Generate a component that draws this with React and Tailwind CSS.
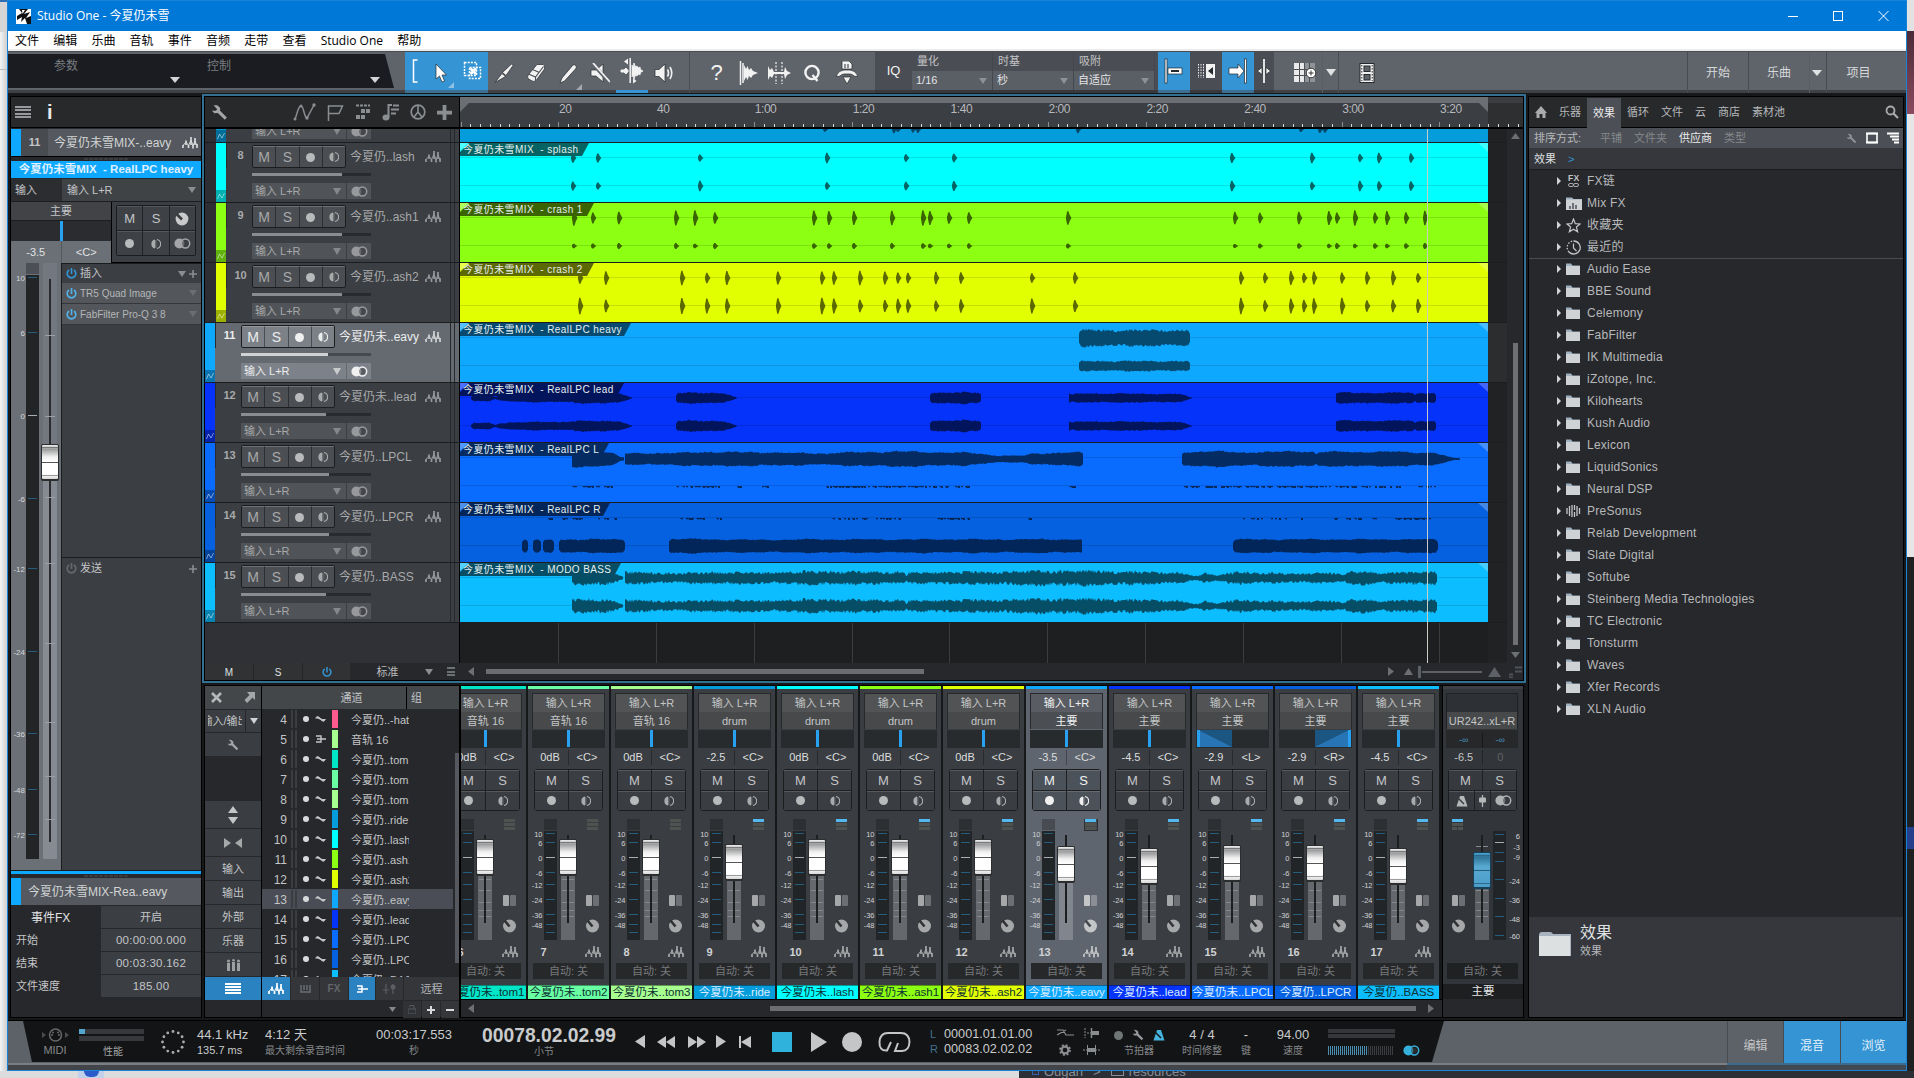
import React from "react";

/* ---------- shared glyphs ---------- */

const Down = ({ c = "#8b8e91", w = 8, h = 6 }) => (
  <svg width={w} height={h} viewBox="0 0 8 6" preserveAspectRatio="none" className="shrink-0">
    <path d="M0 0H8L4 6Z" fill={c} />
  </svg>
);
const Tri = ({ d, c = "#6d7073", w = 8, h = 8 }) => (
  <svg width={w} height={h} viewBox="0 0 10 10" preserveAspectRatio="none" className="shrink-0">
    <path
      d={d === "l" ? "M10 0V10L0 5Z" : d === "r" ? "M0 0V10L10 5Z" : d === "u" ? "M0 10H10L5 0Z" : "M0 0H10L5 10Z"}
      fill={c}
    />
  </svg>
);
const Wave = ({ c = "#97999c" }) => (
  <svg width="16" height="13" viewBox="0 0 16 13" className="shrink-0">
    <path d="M1 12V9M4 9V4.500M6.500 12V9M9 9V1M11 12.500V9M13 9V2M15 12V8" stroke={c} strokeWidth="1.700" />
    <path d="M1 9.500L4 6L6.500 9.500L9 4L11 9.500L13 5L15 9.500" fill="none" stroke={c} strokeWidth="1" />
  </svg>
);
const Dot = ({ c = "#b9babb", s = 9 }) => (
  <svg width={s} height={s} viewBox="0 0 10 10" className="shrink-0">
    <circle cx="5" cy="5" r="5" fill={c} />
  </svg>
);
const Half = ({ c = "#a9abac" }) => (
  <svg width="10" height="10" viewBox="0 0 10 10" className="shrink-0">
    <path d="M4 0.5A4.6 4.6 0 0 0 4 9.5Z" fill={c} />
    <path d="M6 0.5A4.6 4.6 0 0 1 6 9.5" fill="none" stroke={c} strokeWidth="1.2" />
    <path d="M4.8 1V9" stroke={c} strokeWidth="0.6" />
  </svg>
);
const Rings = ({ c = "#a3a5a7" }) => (
  <svg width="17" height="11" viewBox="0 0 17 11" className="shrink-0">
    <circle cx="5.4" cy="5.5" r="5" fill={c} />
    <circle cx="11.3" cy="5.5" r="4.4" fill="none" stroke={c} strokeWidth="1.5" />
    <circle cx="11.3" cy="5.5" r="3.2" fill="#3a3c3f" opacity=".55" />
  </svg>
);
const Dial = ({ c = "#a9abac" }) => (
  <svg width="14" height="14" viewBox="0 0 14 14" className="shrink-0">
    <circle cx="7" cy="7" r="6.4" fill={c} />
    <path d="M7 7.5L1.5 2" stroke="#3b3d40" strokeWidth="2.6" />
  </svg>
);
const Power = ({ c = "#3494d4", s = 11 }) => (
  <svg width={s} height={s} viewBox="0 0 12 12" className="shrink-0">
    <path d="M3.3 2.2A4.7 4.7 0 1 0 8.7 2.2" fill="none" stroke={c} strokeWidth="1.8" />
    <path d="M6 0V6.5" stroke={c} strokeWidth="1.8" />
  </svg>
);
const Plus = ({ c = "#8b8e91", s = 8, t = 2 }) => (
  <svg width={s} height={s} viewBox="0 0 10 10" className="shrink-0">
    <path d="M5 0V10M0 5H10" stroke={c} strokeWidth={t} />
  </svg>
);
const Wrench = ({ c = "#a3a5a7", s = 15 }) => (
  <svg width={s} height={s} viewBox="0 0 15 15" className="shrink-0">
    <path d="M2.2 1L5.5 1.2L8 3.4L8 6L14 12L12.2 14L6 8L3 8.2L0.8 6L4.2 6L5.5 4.6Z" fill={c} />
  </svg>
);
const Lines = ({ c = "#97999c", w = 16, h = 12, n = 4 }) => (
  <div className="flex flex-col justify-between shrink-0" style={{ width: w, height: h }}>
    {Array.from({ length: n }, (_, i) => (
      <div key={i} className="h-[2px]" style={{ background: c }} />
    ))}
  </div>
);
const Grip = () => (
  <div className="flex gap-px justify-center">
    {Array.from({ length: 9 }, (_, i) => (
      <div key={i} className="w-[4px] h-[2px] bg-[#3a3c3f]" />
    ))}
  </div>
);

/* ---------- title, menu, toolbar ---------- */

function TitleBar() {
  return (
    <div className="h-[31px] shrink-0 bg-[#0078d7] border-t border-[#1883d7] flex items-center text-white font-['Open_Sans','Noto_Sans_CJK_SC',sans-serif] text-[12px]">
      <svg width="15" height="15" viewBox="0 0 15 15" className="ml-2 mr-[6px]">
        <rect width="15" height="15" fill="#fff" />
        <path d="M3 0H12L8 5L14 3L10 9L15 7V15H11L9 9L5 13L6 8L1 11V7L6 4Z" fill="#111" />
        <path d="M6 1L9 1L6.5 5Z" fill="#fff" />
      </svg>
      <span>Studio One - 今夏仍未雪</span>
      <div className="ml-auto flex items-center">
        <svg width="118" height="12" viewBox="0 0 118 12" className="mr-[5px]">
          <path d="M5 6.5H15" stroke="#fff" />
          <rect x="50.5" y="1.5" width="9" height="9" fill="none" stroke="#fff" />
          <path d="M95.500 1L105.500 11M105.500 1L95.500 11" stroke="#fff" />
        </svg>
      </div>
    </div>
  );
}

function MenuBar() {
  return (
    <div className="h-[20px] shrink-0 bg-white border-b-2 border-[#ececec] flex items-center gap-[14.200px] pt-[2px] pl-[7px] text-black text-[12px] leading-none font-['Open_Sans','Noto_Sans_CJK_SC',sans-serif]">
      {["文件", "编辑", "乐曲", "音轨", "事件", "音频", "走带", "查看", "Studio One", "帮助"].map((m) => (
        <span key={m}>{m}</span>
      ))}
    </div>
  );
}

const Cell = ({ w, className = "", children }) => (
  <div className={"flex items-center justify-center shrink-0 h-full " + className} style={{ width: w }}>
    {children}
  </div>
);

const Param = ({ w, label, value }) => (
  <div className="flex flex-col h-full shrink-0 text-[11px] border-r border-[#44474c]" style={{ width: w }}>
    <div className="h-[20px] pl-[5px] flex items-center text-[#c2c4c6]">{label}</div>
    <div className="h-[19px] bg-[#5a5e65] pl-[4px] pr-[5px] flex items-center justify-between text-[#e3e4e5]">
      {value}
      <Down c="#8d9196" />
    </div>
  </div>
);

function Toolbar() {
  const ink = "#f2f2f2";
  const o = { stroke: "#26292c", strokeWidth: 0.7 };
  return (
    <div className="h-[42px] shrink-0 bg-[#5f646b] border-t border-[#484b50] flex text-[12px] text-[#d6d8d9] [box-shadow:inset_0_-3px_0_#3e4145]">
      <div className="w-[386px] h-[34px] mt-[2px] bg-[#1a1c21] text-[#797c80] flex [clip-path:polygon(0_0,377px_0,386px_100%,0_100%)]">
        <div className="w-[180px] pl-[46px] flex">
          <span className="mt-[3px]">参数</span>
          <div className="ml-auto mt-[23px] mr-[8px]"><Down c="#d3d5d6" w={10} /></div>
        </div>
        <div className="w-[200px] pl-[19px] flex">
          <span className="mt-[3px]">控制</span>
          <div className="ml-auto mt-[23px] mr-[8px]"><Down c="#d3d5d6" w={10} /></div>
        </div>
      </div>
      <div className="w-[11px]" />
      <div className="w-[83px] h-full bg-[#3494d4] border-b-[3px] border-[#3c6f92] flex items-center">
        <Cell w={20}>
          <svg width="6" height="24" viewBox="0 0 6 24"><path d="M5.500 1H1.500V23H5.500" fill="none" stroke="#fff" strokeWidth="1.500" /></svg>
        </Cell>
        <Cell w={31}>
          <svg width="31" height="38" viewBox="0 0 31 38">
            <path d="M11 12V27L14.500 24L17 30L19.500 29L17 23H21.500Z" fill="#fff" {...o} />
            <path d="M29 30V36H23Z" fill="#8fc0e4" />
          </svg>
        </Cell>
        <Cell w={34}>
          <svg width="20" height="20" viewBox="0 0 20 20">
            <rect x="1.500" y="1.500" width="12" height="13" fill="none" stroke="#fff" strokeWidth="1.500" strokeDasharray="2 1.200" />
            <rect x="6.500" y="6.500" width="11" height="11" fill="none" stroke="#fff" strokeWidth="1.500" strokeDasharray="2 1.200" />
            <path d="M7.500 7.500L13 13M13 7.500L7.500 13" stroke="#fff" strokeWidth="2.800" />
          </svg>
        </Cell>
      </div>
      <Cell w={32}>
        <svg width="20" height="20" viewBox="0 0 20 20"><path d="M17.500 1L8.500 9.500L12 12.500L19 2.500Z" fill={ink} {...o} /><path d="M8 10.500L1 19.500L11.500 13.500Z" fill={ink} {...o} /></svg>
      </Cell>
      <Cell w={32}>
        <svg width="20" height="20" viewBox="0 0 20 20"><path d="M11 1.500L17 1.500Q19 2 18.500 6L10 17.500Q8.500 19 6 18L2 15.500Q1 14 2.500 11.500Z" fill={ink} {...o} /><path d="M2.500 11L9.500 14L17.500 3.500M9.500 14V18M6.500 6.500L13.500 9.500" fill="none" stroke="#4a4d51" strokeWidth="1.100" /></svg>
      </Cell>
      <Cell w={32}>
        <svg width="30" height="38" viewBox="0 0 30 38"><path d="M7 29L9 24L20 11Q22 10 23 12Q24 13.500 22.500 15L11.500 27Z" fill={ink} {...o} /><path d="M29 30V36H23Z" fill="#a5a8ac" /></svg>
      </Cell>
      <Cell w={32}>
        <svg width="20" height="20" viewBox="0 0 20 20"><path d="M1 7H6L13 1V19L6 13H1Z" fill={ink} {...o} /><path d="M2 0L19 19" stroke="#5f646b" strokeWidth="3.500" /><path d="M3 0L20 19" stroke={ink} strokeWidth="1.800" /></svg>
      </Cell>
      <Cell w={32} className="border-b-[3px] border-[#3494d4]">
        <svg width="24" height="26" viewBox="0 0 24 26"><path d="M1 12H4L6 10L7.500 12H8V14H7.500L6 16L4 14H1Z" fill={ink} stroke={ink} /><path d="M12 7L13 9L14 5L15.500 9L17 8L18.500 10L20 9L20.500 11.500L23 13L20.500 14.500L20 17L18.500 16L17 18L15.500 17L14 21L13 17L12 19Z" fill={ink} stroke={ink} strokeWidth=".8" /><path d="M10.200 0V25" stroke={ink} strokeWidth="1.500" /><path d="M8 0.500V6.500L4 3.500ZM13 25.500V20L16.500 23Z" fill={ink} /></svg>
      </Cell>
      <Cell w={42} className="border-r border-[#4a4d52] pr-[9px]">
        <svg width="20" height="20" viewBox="0 0 20 20"><path d="M1 6.500H5L11 1V19L5 13.500H1Z" fill={ink} {...o} /><path d="M13.500 6.500Q15.500 10 13.500 13.500M16 4Q19.500 10 16 16" fill="none" stroke={ink} strokeWidth="1.600" /></svg>
      </Cell>
      <Cell w={53} className="text-[22px] text-[#f2f2f2]">?</Cell>
      <Cell w={12} className="overflow-visible">
        <svg width="20" height="24" viewBox="0 0 20 24" className="shrink-0"><path d="M1.500 0V24M4 2V22" stroke={ink} strokeWidth="1.500" /><path d="M5 4L7 8L8.500 5L10 9L12 7L14 10L19 12L14 14L12 17L10 15L8.500 19L7 16L5 20Z" fill={ink} /></svg>
      </Cell>
      <Cell w={50}>
        <svg width="24" height="22" viewBox="0 0 24 22"><path d="M0 4L2 8L4 6L6 10H16L17 5L19 9L23 11L19 13L17 17L16 12H6L4 16L2 14L0 18Z" fill={ink} /><path d="M8 0V22M14 0V22" stroke={ink} strokeDasharray="2 1.500" strokeWidth="1.200" /></svg>
      </Cell>
      <Cell w={14}>
        <svg width="18" height="20" viewBox="0 0 18 20" className="shrink-0"><circle cx="9" cy="9.500" r="6.600" fill="none" stroke={ink} strokeWidth="2.400" /><path d="M9.500 12L14.500 18" stroke={ink} strokeWidth="2.400" /></svg>
      </Cell>
      <Cell w={56}>
        <svg width="24" height="24" viewBox="0 0 24 24"><path d="M7 0H14L17 3V8H7ZM1 15Q4 9 9 9H15Q20 9 23 15L20 15.500Q17 13 15 13H9Q7 13 4 15.500ZM8 16H16L12 23Z" fill={ink} {...o} /><path d="M10 3V7M13 3V7" stroke="#4b4f54" strokeWidth="1.200" /></svg>
      </Cell>
      <Cell w={37} className="bg-[#4a4d53] text-[13px] text-[#f2f2f2] border-b-[3px] border-[#37393d]">IQ</Cell>
      <div className="flex bg-[#4a4d53] h-full border-b-[3px] border-[#37393d] shrink-0">
        <Param w={81} label="量化" value="1/16" />
        <Param w={81} label="时基" value="秒" />
        <Param w={81} label="吸附" value="自适应" />
        <div className="w-[3px]" />
      </div>
      <Cell w={32} className="bg-[#3494d4] border-b-[3px] border-[#3c6f92]">
        <svg width="20" height="26" viewBox="0 0 20 26"><rect x="1" y="1" width="2" height="24" fill="#fff" {...o} /><rect x="4" y="10" width="14" height="6" fill="#fff" {...o} /><rect x="7" y="12" width="8" height="2" fill="#26292c" /></svg>
      </Cell>
      <Cell w={32} className="bg-[#4a4d53] border-b-[3px] border-[#37393d]">
        <svg width="18" height="14" viewBox="0 0 18 14"><path d="M1.500 0V14M4 0V14M6.500 0V14" stroke={ink} strokeDasharray="1.500 1.200" /><rect x="9" y="0" width="9" height="14" fill={ink} /><path d="M16 3V11L11 7Z" fill="#26292c" /></svg>
      </Cell>
      <Cell w={32} className="bg-[#3494d4] border-b-[3px] border-[#3c6f92]">
        <svg width="20" height="26" viewBox="0 0 20 26"><path d="M1 10H10V6L16 13L10 20V16H1Z" fill="#fff" {...o} /><rect x="16.500" y="1" width="2" height="24" fill="#fff" {...o} /></svg>
      </Cell>
      <Cell w={20} className="bg-[#4a4d53] border-b-[3px] border-[#37393d]">
        <svg width="14" height="24" viewBox="0 0 14 24"><path d="M7 0V24" stroke={ink} strokeWidth="1.800" /><path d="M5 8.500V15.500L0.500 12ZM9 8.500V15.500L13.500 12Z" fill={ink} {...o} /></svg>
      </Cell>
      <Cell w={48} className="pl-[14px]">
        <svg width="23" height="20" viewBox="0 0 23 20"><rect x="0" y="0" width="21" height="19" fill="#e9e9e9" /><rect x="11" y="0" width="10" height="19" fill="#8f9397" /><path d="M5.500 0V19M10.500 0V19M15.500 0V19M0 6.500H21M0 12.500H21" stroke="#4b4f54" /><circle cx="17" cy="10" r="4.800" fill="#fff" stroke="#333" /><path d="M17 7.500V12.500M14.500 10H19.500" stroke="#333" /></svg>
      </Cell>
      <Cell w={17} className="border-r border-l border-r-[#4a4d52] border-l-[#595d64]"><Down c="#e0e1e2" w={10} h={7} /></Cell>
      <Cell w={55}>
        <svg width="16" height="20" viewBox="0 0 16 20"><rect x="1" y="0.500" width="14" height="19" fill="#f0f0f0" stroke="#26292c" /><rect x="5" y="3" width="6" height="5.500" fill="#5f646b" stroke="#26292c" /><rect x="5" y="11.500" width="6" height="5.500" fill="#5f646b" stroke="#26292c" /><path d="M2.800 2V18M13.200 2V18" stroke="#26292c" strokeDasharray="1.500 1.500" /></svg>
      </Cell>
      <div className="flex-1" />
      <Cell w={61} className="border-l border-[#484b50]">开始</Cell>
      <Cell w={61} className="border-l border-[#484b50]">乐曲</Cell>
      <Cell w={17} className="border-l border-[#595d64] pr-[2px]"><Down c="#e0e1e2" w={10} /></Cell>
      <Cell w={80} className="border-l border-[#484b50] pr-[16px]">项目</Cell>
    </div>
  );
}

/* ---------- inspector ---------- */

const Knob = ({ x, y, w = 18, h = 37, blue }) => (
  <g>
    <rect x={x} y={y} width={w} height={h} rx="2" fill={blue ? "#17415a" : "#2c2d2e"} />
    <rect x={x + 1} y={y + 1} width={w - 2} height={h - 3} rx="1" fill={blue ? "url(#kb)" : "url(#kw)"} />
    <rect x={x + 1} y={y + 3} width={w - 2} height="1" fill={blue ? "#2b6a8b" : "#77797b"} />
    <rect x={x + 1} y={y + h - 6} width={w - 2} height="1" fill={blue ? "#2b6a8b" : "#9a9c9e"} />
    <rect x={x + 1} y={y + Math.floor(h / 2)} width={w - 2} height="1" fill={blue ? "#255d7a" : "#555"} />
  </g>
);

function Inspector() {
  const marks = [[10, 15], [6, 70], [0, 153], [-6, 236], [-12, 306], [-24, 389], [-36, 471], [-48, 527], [-72, 572]];
  return (
    <div className="w-[192px] mt-[3px] h-[922px] border border-black bg-[#27282b] shrink-0 flex flex-col text-[#c3c5c7] text-[11px]">
      <div className="h-[31px] bg-[#27292b] border-b border-black flex items-center pl-[4px] gap-[16px]">
        <Lines />
        <span className="text-[#e8e9ea] text-[20px] font-bold leading-none">i</span>
      </div>
      <div className="h-[28px] mt-px flex bg-[#55595f] text-[12px] border-b border-black shrink-0">
        <div className="w-[10px] bg-[#0fa8ff]" />
        <div className="w-[27px] bg-[#484b50] flex items-center justify-center text-[11px] font-bold">11</div>
        <div className="flex-1 flex items-center justify-between pl-[6px] pr-[3px] whitespace-nowrap text-[#d2d4d5]">
          今夏仍未雪MIX-..eavy <Wave c="#d8dadb" />
        </div>
      </div>
      <div className="h-[4px] pt-px shrink-0"><Grip /></div>
      <div className="h-[17px] shrink-0 bg-[#0fa8ff] text-[#dff0ff] font-bold text-[11.500px] leading-none flex items-center justify-center whitespace-pre">{"今夏仍未雪MIX  - RealLPC heavy"}</div>
      <div className="h-[23px] mt-px shrink-0 flex border-b border-[#1c1d1f]">
        <div className="w-[51px] flex items-center pl-[4px] bg-[#2c2d30]">输入</div>
        <div className="flex-1 bg-[#404346] flex items-center justify-between px-[5px]">输入 L+R <Down /></div>
      </div>
      <div className="flex h-[61px] shrink-0">
        <div className="w-[100px] flex flex-col">
          <div className="h-[19px] bg-[#414347] flex items-center justify-center border-b border-[#1b1c1e] pt-px">主要</div>
          <div className="h-[20px] bg-[#2a2c2f] flex justify-center"><div className="w-[3px] bg-[#2aa0f0]" /></div>
          <div className="h-[22px] bg-[#6b7077] flex text-[#e0e2e3]">
            <div className="flex-1 flex items-center justify-center border-r border-[#55595f]">-3.5</div>
            <div className="flex-1 flex items-center justify-center">&lt;C&gt;</div>
          </div>
        </div>
        <div className="flex-1 bg-[#3b3e43] border-l border-black border-b pt-[3px] pl-[4px]">
          <div className="w-[80px] h-[51px] grid grid-cols-3 grid-rows-2 gap-px bg-[#202123] border border-[#1b1c1e] rounded-[2px] text-[13px] leading-none">
            {["M", "S", <Dial key="d" c="#c9cacb" />, <Dot key="o" s={9} />, <Half key="h" />, <Rings key="r" />].map((b, i) => (
              <div key={i} className="bg-[#3e4246] flex items-center justify-center border-t border-[#54575b]">{b}</div>
            ))}
          </div>
        </div>
      </div>
      <div className="flex h-[607px] shrink-0">
        <div className="w-[51px] bg-[#6b7077] border-r border-[#1b1c1e] shrink-0">
          <svg width="50" height="607" className="block">
            <defs>
              <linearGradient id="kw" x2="0" y2="1"><stop offset="0" stopColor="#f0f0f0" /><stop offset=".12" stopColor="#9a9b9c" /><stop offset=".35" stopColor="#f0f0f0" /><stop offset=".5" stopColor="#fff" /><stop offset=".85" stopColor="#fff" /><stop offset="1" stopColor="#d8d8d8" /></linearGradient>
              <linearGradient id="kb" x2="0" y2="1"><stop offset="0" stopColor="#4aa3cf" /><stop offset=".12" stopColor="#2f7396" /><stop offset=".4" stopColor="#58a9d2" /><stop offset="1" stopColor="#4c9ec9" /></linearGradient>
            </defs>
            <rect x="15" y="0" width="13" height="11" fill="#4c5056" />
            <rect x="15" y="12" width="13" height="584" fill="#222426" />
            <rect x="32" y="181" width="14" height="415" fill="#868b93" />
            <rect x="32" y="0" width="14" height="181" fill="#737880" />
            <rect x="38" y="16" width="2" height="563" fill="#2a2c2e" />
            {[72, 153, 234, 300, 380, 459, 513, 556].map((y) => <rect key={y} x="34" y={y} width="10" height="1" fill="#9ba0a6" />)}
            {marks.map(([t, y]) => (
              <g key={t}>
                <rect x="17" y={y - 1} width="9" height="1" fill={t === 0 ? "#a9adb1" : "#275d7c"} />
                <text x="14" y={y + 2.500} textAnchor="end" fontSize="8" fill="#d5d7d9">{t}</text>
              </g>
            ))}
            <Knob x={30} y={181} />
          </svg>
        </div>
        <div className="flex-1 bg-[#3b3e43] flex flex-col">
          <div className="h-[20px] border-t border-[#1b1c1e] flex items-center px-[4px] gap-[3px]">
            <Power />
            <span className="flex-1">插入</span>
            <Down /><Plus s={8} />
          </div>
          {["TR5 Quad Image", "FabFilter Pro-Q 3 8"].map((t) => (
            <div key={t} className="h-[21px] bg-[#53575b] border-b border-[#34363a] flex items-center px-[4px] gap-[3px] text-[10px] text-[#b4b6b8]">
              <Power c="#54b0e8" /><span className="flex-1">{t}</span><Down c="#6b6e72" />
            </div>
          ))}
          <div className="h-[232px]" />
          <div className="h-[22px] border-t border-[#1b1c1e] flex items-center px-[4px] gap-[3px]">
            <Power c="#66696c" /><span className="flex-1">发送</span><Plus s={8} />
          </div>
        </div>
      </div>
      <div className="h-[4px] shrink-0 bg-[#0fa8ff] border-t border-[#1b1c1e]" />
      <div className="h-[4px] shrink-0 pt-px"><Grip /></div>
      <div className="h-[27px] shrink-0 bg-[#55595f] flex items-center text-[12px] text-[#d2d4d5]">
        <div className="w-[10px] h-full bg-[#0fa8ff] mr-[7px]" />今夏仍未雪MIX-Rea..eavy
      </div>
      {[["事件FX", "开启"], ["开始", "00:00:00.000"], ["结束", "00:03:30.162"], ["文件速度", "185.00"]].map(([a, b], i) => (
        <div key={a} className="h-[22px] mt-px shrink-0 flex">
          <div className={"w-[90px] flex items-center pt-px " + (i ? "pl-[5px]" : "pl-[20px] text-[#e2e3e4] text-[12px]")}>{a}</div>
          <div className={"flex-1 bg-[#3b3e43] flex items-center justify-center pt-px " + (i ? "text-[11.500px] tracking-[.25px]" : "")}>{b}</div>
        </div>
      ))}
    </div>
  );
}

/* ---------- arrangement ---------- */

const rnd = (n) => {
  const s = Math.sin(n * 127.1 + 11.7) * 43758.5453;
  return s - Math.floor(s);
};
/* A filled band whose half height follows the [x, amp] points, roughened per pixel. */
function band(points, cy, seed, rough = 0.28) {
  const up = [];
  const dn = [];
  for (let x = points[0][0]; x <= points[points.length - 1][0]; x += 1) {
    let i = 0;
    while (i < points.length - 2 && points[i + 1][0] < x) i += 1;
    const [xa, a] = points[i];
    const [xb, b] = points[i + 1];
    const amp = a + ((b - a) * (x - xa)) / Math.max(1, xb - xa);
    const swell = 0.06 * Math.sin(x / 9 + seed) + 0.05 * Math.sin(x / 3.7 + seed * 2);
    up.push(`${x} ${(cy - amp * (1 + swell - rough / 2 + rough * rnd(x + seed))).toFixed(1)}`);
    dn.unshift(`${x} ${(cy + amp * (1 + swell - rough / 2 + rough * rnd(x * 1.7 + seed))).toFixed(1)}`);
  }
  return `M${up.join("L")}L${dn.join("L")}Z`;
}
const flat = (a, b, h) => [[a, h * 0.6], [a + 2, h], [b - 2, h], [b, h * 0.6]];
function dashes(ranges, cy) {
  let d = "";
  ranges.forEach(([a, b, dens = 0.5]) => {
    for (let x = a; x < b; x += 2) if (rnd(x * 3.3 + cy) < dens) d += `M${x} ${cy}h${rnd(x) > 0.5 ? 3 : 2}v${rnd(x + 1) > 0.6 ? 2 : 1.2}h-2z`;
  });
  return d;
}
const spikes = (xs, cy, h, seed) =>
  xs.map((x, i) => {
    const k = h * (0.75 + 0.45 * rnd(i + seed));
    return `M${x - 2} ${cy - 1}L${x - 0.8} ${cy - k}H${x + 0.4}L${x + 1.6} ${cy - k * 0.5}L${x + 3.4} ${cy}L${x + 1.6} ${cy + k * 0.5}L${x + 0.4} ${cy + k}H${x - 0.8}L${x - 2} ${cy + 1}Z`;
  }).join("");

const SPLASH = [113, 138, 240, 367, 446, 494, 772, 852, 900, 919, 951];
const CR1 = [114, 133, 159, 216, 235, 255, 354, 369, 394, 432, 463, 470, 489, 509, 608, 775, 800, 839, 869, 877, 895, 915, 927, 946, 965];
const CR2 = [120, 146, 222, 247, 267, 318, 362, 374, 400, 425, 438, 448, 476, 501, 572, 615, 781, 805, 831, 844, 854, 882, 907, 933, 958];
const L1 = 15;
const L2 = 43;
const LEAD = [
  [[11, 1], [14, 3], [30, 3], [35, 1], [40, 3], [70, 4], [100, 4], [120, 5], [160, 5], [164, 3], [172, 0.3]],
  [[216, 3], [218, 5], [264, 5], [270, 3], [277, 0.3]],
  flat(470, 521, 5.200),
  [[609, 4], [612, 3], [617, 4.500], [720, 4], [732, 0.3]],
  [[876, 4], [879, 5.200], [952, 5], [955, 3], [958, 5], [974, 5], [976, 3]],
];
const LB = [
  [[112, 6.500], [114, 6], [153, 5.500], [158, 3.500], [163, 1.500]],
  [[165, 5.500], [190, 4.800], [220, 4.200], [260, 5.500], [300, 4.800], [350, 6], [400, 5.500], [444, 5.500], [446, 2], [449, 5], [520, 5.500], [600, 6.500], [660, 6], [720, 5], [732, 2.500], [738, 2], [745, 4], [757, 2.500], [765, 4], [775, 6], [800, 4], [815, 5], [840, 3.500], [870, 5], [884, 3], [890, 6], [915, 5], [922, 3.500], [927, 5], [975, 5.500], [977, 3]],
];

const TRACKS = [
  { n: 7, child: true, c: "#049cda", w: "#06486a", lane: "ride", name: "今夏仍..ride", fill: 0.76, body: () => spikes([365, 434, 438, 453, 458, 618, 841, 860, 865], 46, 3.5, 3) },
  { n: 8, child: true, c: "#00ffff", w: "#056463", lane: "splash", tab: 129, name: "今夏仍..lash", fill: 0.76, body: () => spikes(SPLASH, L1, 4.500, 1) + spikes(SPLASH, L2, 4.500, 2) },
  { n: 9, child: true, c: "#8cff12", w: "#3a6400", lane: "crash 1", tab: 134, name: "今夏仍..ash1", fill: 0.76, body: () => spikes(CR1, L1, 6.500, 4) + spikes(CR1, L2, 2.600, 5) },
  { n: 10, child: true, c: "#e1ff00", w: "#5c6800", lane: "crash 2", tab: 134, name: "今夏仍..ash2", fill: 0.76, body: () => spikes(CR2, L1, 6, 6) + spikes(CR2, L2, 7, 8) },
  { n: 11, sel: true, c: "#0fa8ff", w: "#064a70", lane: "RealLPC heavy", tab: 171, name: "今夏仍未..eavy", fill: 0.67, body: () => band(flat(619, 730, 7.500), L1, 1, 0.35) + band(flat(619, 730, 4.800), L2, 2, 0.3) },
  { n: 12, c: "#0533fa", w: "#02145c", lane: "RealLPC lead", tab: 164, name: "今夏仍未..lead", fill: 0.65, body: () => LEAD.map((p, i) => band(p, L1, i) + band(p, L2, i)).join("") },
  {
    n: 13, c: "#0a6cff", w: "#042c62", lane: "RealLPC L", tab: 149, name: "今夏仍..LPCL", fill: 0.68,
    body: () =>
      band([[112, 7], [115, 7.800], [152, 7], [157, 4], [160, 2], [164, 1.500]], L1 + 1, 1, 0.15) +
      band([[165, 5], [167, 5.500], [220, 6], [250, 7], [305, 6.500], [360, 5.500], [366, 5], [372, 6], [440, 7.500], [480, 6.500], [510, 6], [526, 4.500], [540, 3.200], [565, 3.400], [572, 5], [590, 6], [620, 6.500], [623, 5]], L1 + 1, 2, 0.2) +
      band([[722, 5], [724, 7], [760, 7.500], [780, 6.500], [840, 7.500], [853, 7], [856, 5], [860, 7], [940, 7], [974, 6], [988, 2.500], [994, 1], [1000, 0.8]], L1 + 1, 5, 0.18) +
      dashes([[112, 152, 0.7], [212, 262], [275, 285], [302, 322, 0.4], [366, 400, 0.9], [400, 465, 0.8], [465, 512, 0.5], [609, 615], [722, 740], [745, 870, 0.85], [875, 925, 0.6], [930, 975, 0.35]], L2),
  },
  {
    n: 14, c: "#0561e0", w: "#03265a", lane: "RealLPC R", tab: 150, name: "今夏仍..LPCR", fill: 0.68,
    body: () =>
      [[62, 68], [73, 81], [83, 94], [99, 165]].map(([a, b]) => band(flat(a, b, 6.500), L2, a, 0.15)).join("") +
      band([[209, 5], [211, 7], [265, 6.500], [300, 6], [340, 6.500], [621, 6.500], [622, 6]], L2, 7, 0.15) +
      band(flat(773, 978, 6.500), L2, 8, 0.15) +
      dashes([[88, 92, 0.9], [100, 160, 0.45], [220, 262, 0.5], [372, 440, 0.45], [475, 510, 0.6], [568, 572, 1], [783, 845, 0.5], [872, 915, 0.5], [935, 970, 0.6]], L1),
  },
  { n: 15, c: "#0cbdff", w: "#064d66", lane: "MODO BASS", tab: 161, name: "今夏仍..BASS", fill: 0.65, body: () => LB.map((p, i) => band(p, L1, i, 0.6) + band(p, L2, i, 0.6)).join("") },
];

function TrackHeader({ t }) {
  const ink = t.sel ? "#eceded" : "#a7a9ab";
  const btn = t.sel ? "bg-[#7c8188]" : "bg-[#4b4e52]";
  const box = t.sel ? "bg-[#7d828a]" : "bg-[#505357]";
  return (
    <div className="h-[60px] flex shrink-0 border-b border-[#1c1d1f]" style={{ color: ink }}>
      {t.child && <div className="w-[11px] bg-[#2c2e33]" />}
      <div className="w-[10px] flex flex-col justify-end" style={{ background: t.c }}>
        <div className="h-[12px] bg-black/30 flex items-center justify-center">
          <svg width="8" height="8" viewBox="0 0 8 8"><path d="M0.500 7L2.500 2L5 6L7.500 1" fill="none" stroke="#fff" opacity=".55" strokeWidth=".9" /></svg>
        </div>
      </div>
      <div className={"flex flex-1 " + (t.sel ? "bg-[#656a71]" : "bg-[#3b3e42]")}>
        <div className="w-[26px] h-[25px] pl-[2px] flex items-center justify-center text-[11px] font-bold border-l border-[#2a2b2e]">{t.n}</div>
        <div className="flex flex-col pt-[2px] flex-1">
          <div className="flex items-center">
            <div className={"h-[23px] w-[94px] border border-[#1c1d1f] rounded-[2px] flex text-[14px] leading-none " + btn}>
              {["M", "S", <Dot key="d" c={t.sel ? "#f0f0f0" : "#b9babb"} s={9} />, <Half key="h" c={ink} />].map((b, i) => (
                <div key={i} className="flex-1 flex items-center justify-center border-t border-t-white/20 border-r border-r-black/40 last:border-r-0">{b}</div>
              ))}
            </div>
            <div className="flex-1 pl-[4px] text-[12px] whitespace-nowrap leading-none">{t.name}</div>
            <div className="mr-[9px]"><Wave c={t.sel ? "#d0d2d4" : "#97999c"} /></div>
          </div>
          <div className={"mt-[5px] h-[3px] " + (t.sel ? "bg-[#46494e]" : "bg-[#2a2b2e]")} style={{ width: t.child ? 119 : 130 }}>
            <div className={"h-full " + (t.sel ? "bg-[#d0d1d2]" : "bg-[#8a8c8f]")} style={{ width: `${t.fill * 100}%` }} />
          </div>
          <div className="flex mt-[7px] gap-px text-[11px]">
            <div className={"h-[16px] pl-[3px] pr-[5px] flex items-center justify-between " + box} style={{ width: t.child ? 94 : 105 }}>
              输入 L+R <Down c={t.sel ? "#c9cbcd" : "#85888b"} w={8} h={7} />
            </div>
            <div className={"h-[16px] w-[24px] flex items-center justify-center " + box}><Rings c={t.sel ? "#f0f0f0" : "#97999c"} /></div>
          </div>
        </div>
        <div className="w-[5px] border-l border-r border-[#27282b]" />
        <div className="w-[4px]" />
      </div>
    </div>
  );
}

function Lane({ t }) {
  return (
    <div className={"h-[60px] shrink-0 border-b border-[#1c1d1f] relative " + (t.sel ? "bg-[#2c2d2e]" : "bg-[#212223]")}>
      <div className="w-[1028px] h-[59px] overflow-hidden" style={{ background: t.c }}>
        <svg width="1028" height="59" className="block">
          <rect x="0" y="14" width="1028" height="1" fill="#000" opacity=".12" />
          <rect x="0" y="42" width="1028" height="1" fill="#000" opacity=".12" />
          <path d={t.body()} fill={t.w} />
          {t.tab && <path d="M1018 0H1028V9Z" fill="#fff" opacity=".25" />}
          {t.tab && <path d={`M0 13V9L9 0H${t.tab}L${t.tab - 7} 13Z`} fill={t.w} />}
          {t.tab && <path d="M0 0H8L0 8Z" fill="#fff" opacity=".3" />}
        </svg>
      </div>
      {t.tab && <div className="absolute left-[3px] top-0 h-[14px] flex items-center text-[10px] leading-none text-[#e4efef] whitespace-pre tracking-[.4px]">{"今夏仍未雪MIX  - " + t.lane}</div>}
    </div>
  );
}

function Ruler() {
  const ticks = Array.from({ length: 109 }, (_, i) => 0.5 + i * 9.790);
  const labels = ["20", "40", "1:00", "1:20", "1:40", "2:00", "2:20", "2:40", "3:00", "3:20"];
  return (
    <div className="flex-1 h-[30px] bg-[#2d2f31]">
      <svg width="1063" height="30" className="block">
        <rect width="1028" height="30" fill="#6b6f74" />
        <path d="M0 30V15L9 6H1019L1028 15V30Z" fill="#3b3e43" />
        <rect x="1028" y="0" width="35" height="6" fill="#3b3d40" />
        {ticks.map((x, i) => <rect key={i} x={Math.round(x)} y={i % 10 ? 27 : 25} width="1" height={i % 10 ? 4 : 6} fill={i % 10 ? "#d5d7d8" : "#8b8e92"} />)}
        {labels.map((l, i) => <text key={l} x={99 + i * 97.900} y="16" fontSize="12" textLength={l.length > 2 ? 22 : 13} fill="#b7b9bc">{l}</text>)}
      </svg>
    </div>
  );
}

function Arrange() {
  const g = "#8b8e91";
  return (
    <div className="w-[1324px] h-[589px] mt-px border-2 border-[#336f91] shrink-0">
      <div className="h-full border border-black flex flex-col bg-[#27282b]">
        <div className="h-[32px] shrink-0 flex border-b-2 border-black">
          <div className="w-[254px] bg-[#27292b] flex items-center pl-[6px] pr-[7px]">
            <Wrench s={17} />
            <div className="flex-1" />
            <div className="flex items-center gap-[10.700px]">
              <svg width="24" height="18" viewBox="0 0 24 18"><path d="M2 16C4 12 5 3 8 3S11 15 14 15L21 2" fill="none" stroke={g} strokeWidth="1.500" /><circle cx="2" cy="16" r="1.500" fill={g} /><circle cx="14" cy="15" r="1.700" fill={g} /><circle cx="21" cy="2" r="1.700" fill={g} /><circle cx="8" cy="3" r="1.500" fill={g} /></svg>
              <svg width="17" height="17" viewBox="0 0 17 17"><path d="M1.500 17V2H15.500L12 9.500H1.500" fill="none" stroke={g} strokeWidth="1.500" /></svg>
              <svg width="16" height="16" viewBox="0 0 16 16"><path d="M1 1.500H15" stroke={g} strokeWidth="2" strokeDasharray="3 1" /><path d="M6 5H10V9H6ZM11 5H15V9H11ZM1 11H5V15H1ZM6 11H10V15H6Z" fill={g} /></svg>
              <svg width="18" height="17" viewBox="0 0 18 17"><ellipse cx="4" cy="13.500" rx="3.500" ry="3" fill={g} /><path d="M6.500 13V1H10M9 5.500H17M9 9.500H14M11 1.500H17" stroke={g} strokeWidth="2" fill="none" /></svg>
              <svg width="16" height="16" viewBox="0 0 16 16"><circle cx="8" cy="8" r="6.800" fill="none" stroke={g} strokeWidth="1.700" /><path d="M8 1V8L4 13M8 8L12 13" stroke={g} strokeWidth="1.600" fill="none" /></svg>
              <Plus s={15} t={2.500} />
            </div>
          </div>
          <div className="w-px bg-black" />
          <Ruler />
        </div>
        <div className="h-[534px] shrink-0 flex overflow-hidden">
          <div className="w-[254px] bg-[#2f3136] flex flex-col">
            <div className="-mt-[46px] flex flex-col">{TRACKS.map((t) => <TrackHeader key={t.n} t={t} />)}</div>
          </div>
          <div className="w-px bg-black" />
          <div className="w-[1047px] relative bg-[#1e1f20]">
            <div className="-mt-[46px] flex flex-col">{TRACKS.map((t) => <Lane key={t.n} t={t} />)}</div>
            <div className="h-[40px] flex pl-px">
              {Array.from({ length: 10 }, (_, i) => <div key={i} className="w-[97.9px] h-full border-r border-[#3a3c3e]" />)}
              <div className="flex-1" />
              <div className="w-[19px] bg-[#212223]" />
            </div>
            <div className="absolute left-[967px] top-0 w-px h-[534px] bg-[#c9cbc4]" />
          </div>
          <div className="w-[16px] bg-[#27282b] flex flex-col items-center pt-[4px]">
            <Tri d="u" w={9} h={6} />
            <div className="w-[5px] h-[302px] mt-[204px] bg-[#6d6f72]" />
            <div className="mt-[7px]"><Tri d="d" w={9} h={6} /></div>
          </div>
        </div>
        <div className="h-[17px] shrink-0 flex items-center text-[11px] leading-none text-[#dfe0e1]">
          <div className="w-[49px] h-full bg-[#303234] border-r border-[#242527] flex items-center justify-center text-[10px] pt-[2px]">M</div>
          <div className="w-[49px] h-full bg-[#303234] border-r border-[#242527] flex items-center justify-center text-[10px] pt-[2px]">S</div>
          <div className="w-[47px] h-full bg-[#303234] flex items-center justify-center"><Power s={10} /></div>
          <div className="w-[75px] flex justify-center text-[#b7b9bb] pt-[2px]">标准</div>
          <Down />
          <div className="ml-[14px]"><Lines c="#6d7073" w={8} h={9} n={3} /></div>
          <div className="ml-[13px]"><Tri d="l" w={6} h={9} /></div>
          <div className="ml-[12px] w-[438px] h-[5px] bg-[#6b6d6f]" />
          <div className="ml-[464px]"><Tri d="r" w={6} h={9} /></div>
          <div className="ml-[10px]"><Tri d="u" w={9} h={7} /></div>
          <div className="ml-[5px] w-[3px] h-[12px] bg-[#5d6167]" />
          <div className="ml-px w-[60px] h-[2px] bg-[#5d6167]" />
          <div className="ml-[6px]"><Tri d="u" w={13} h={10} c="#5d6167" /></div>
          <svg width="14" height="12" viewBox="0 0 14 12" className="ml-[8px]"><path d="M6 1.500H13M6 5.500H13M0 8.500H4M0 11.500H4" stroke="#4e5258" strokeWidth="2" /></svg>
        </div>
      </div>
    </div>
  );
}

/* ---------- console ---------- */

const CHANNELS = [
  { n: 6, c: "#00e5c8", name: "今夏仍未..tom1", out: "音轨 16", v: "0dB", p: "<C>", y: 38 },
  { n: 7, c: "#69ffa3", name: "今夏仍未..tom2", out: "音轨 16", v: "0dB", p: "<C>", y: 38 },
  { n: 8, c: "#a6ff8f", name: "今夏仍未..tom3", out: "音轨 16", v: "0dB", p: "<C>", y: 38 },
  { n: 9, c: "#049cda", name: "今夏仍未..ride", out: "drum", v: "-2.5", p: "<C>", y: 43, fx: true, light: true },
  { n: 10, c: "#00ffff", name: "今夏仍未..lash", out: "drum", v: "0dB", p: "<C>", y: 38, fx: true },
  { n: 11, c: "#8cff12", name: "今夏仍未..ash1", out: "drum", v: "0dB", p: "<C>", y: 38, fx: true },
  { n: 12, c: "#e1ff00", name: "今夏仍未..ash2", out: "drum", v: "0dB", p: "<C>", y: 38, fx: true },
  { n: 13, c: "#0fa8ff", name: "今夏仍未..eavy", out: "主要", v: "-3.5", p: "<C>", y: 45, fx: true, sel: true, light: true },
  { n: 14, c: "#0533fa", name: "今夏仍未..lead", out: "主要", v: "-4.5", p: "<C>", y: 47, fx: true, light: true },
  { n: 15, c: "#0a6cff", name: "今夏仍未..LPCL", out: "主要", v: "-2.9", p: "<L>", y: 44, fx: true, light: true },
  { n: 16, c: "#0561e0", name: "今夏仍..LPCR", out: "主要", v: "-2.9", p: "<R>", y: 44, fx: true, light: true },
  { n: 17, c: "#0cbdff", name: "今夏仍..BASS", out: "主要", v: "-4.5", p: "<C>", y: 47, fx: true },
];

function Pan({ p }) {
  return (
    <svg width="73" height="18" className="block bg-[#282b2e]">
      {p === "<L>" && <><rect x="2" width="34" height="17" fill="#1b5582" /><path d="M2 0L36 17H2Z" fill="#2775b4" /></>}
      {p === "<R>" && <><rect x="36" width="34" height="17" fill="#1b5582" /><path d="M70 0L36 17H70Z" fill="#2775b4" /></>}
      <rect x={p === "<L>" ? 1 : p === "<R>" ? 69 : 35} width="3" height="17" fill="#2aa0f0" />
    </svg>
  );
}

const SCALE = [[10, 15], [6, 24], [0, 39], [-6, 54], [-12, 66], [-24, 81], [-36, 96], [-48, 106]];

function FaderArea({ ch }) {
  const k = ch.y;
  const g = ch.sel ? "#c3c5c7" : "#a5a7a8";
  return (
    <svg width="81" height="142" className="block">
      <rect x="16" y="0" width="13" height="11" fill={ch.sel ? "#484c52" : "#2d3033"} />
      <rect x="16" y="12" width="13" height="109" fill="#222527" />
      <rect x="33" y={k} width="14" height={121 - k} fill={ch.sel ? "#81868e" : "#65686c"} />
      {[60, 71, 83, 91, 97].map((y) => <rect key={y} x="34" y={y} width="12" height="1" fill="#85888c" />)}
      <rect x="39" y="16" width="2" height="88" fill="#1d1e1f" />
      {SCALE.map(([t, y]) => (
        <g key={t}>
          <rect x="18" y={y - 1} width="9" height="1" fill={t === 0 ? "#a9adb1" : "#275d7c"} />
          <text x="14.500" y={y + 2.500} fontSize="7.500" textAnchor="end" fill="#d0d2d4">{t}</text>
        </g>
      ))}
      <rect x="18" y="113" width="9" height="1" fill="#275d7c" />
      <Knob x={31} y={k - 18} />
      {ch.sel && <rect x="58.500" y="-0.500" width="13" height="12" fill="#44484d" stroke="#2c2f33" />}
      <rect x="59" y="0" width="11" height="3" fill={ch.fx ? "#54b8f0" : "#505250"} />
      <rect x="59" y="4" width="11" height="3" fill="#505250" />
      <rect x="59" y="8" width="11" height="3" fill="#505250" />
      <rect x="58" y="76" width="6" height="11" rx="1" fill={g} />
      <rect x="65" y="76" width="6" height="11" rx="1" fill={ch.sel ? "#8b8f95" : "#6c6f73"} />
      <circle cx="64.500" cy="107" r="6.500" fill={g} />
      <path d="M64.500 107.500L59.500 101.500" stroke={ch.sel ? "#44484d" : "#303235"} strokeWidth="2.600" />
      <text x="12.500" y="137" fontSize="11" fontWeight="bold" fill="#d0d2d4">{ch.n}</text>
      <g transform="translate(57 126)">
        <path d="M1 12V9M4 9V4.500M6.500 12V9M9 9V1M11 12.500V9M13 9V2M15 12V8" stroke={g} strokeWidth="1.700" />
        <path d="M1 9.500L4 6L6.500 9.500L9 4L11 9.500L13 5L15 9.500" fill="none" stroke={g} strokeWidth="1" />
      </g>
    </svg>
  );
}

function Strip({ ch }) {
  const ink = ch.sel ? "text-[#f0f1f2]" : "text-[#c3c5c7]";
  return (
    <div className={"w-[81px] shrink-0 flex flex-col " + ink + (ch.sel ? " bg-[#5f656e]" : " bg-[#3a3d42]")}>
      <div className="h-[3px] shrink-0" style={{ background: ch.c }} />
      <div className="mx-[4px] mt-[4px] border border-b-0 border-[#27282b] text-[11px] h-[36px] flex flex-col">
        <div className={"h-[18px] flex items-center justify-center pt-px " + (ch.sel ? "bg-[#595d63]" : "bg-[#515354]")}>输入 L+R</div>
        <div className={"h-[17px] flex items-center justify-center pt-px " + (ch.sel ? "bg-[#4b4f54]" : "bg-[#47494a]")}>{ch.out}</div>
      </div>
      <div className="mx-[4px] mt-px"><Pan p={ch.p} /></div>
      <div className="mx-[4px] h-[17px] flex text-[11px] text-[#dcdedf] pt-[2px]">
        <div className="flex-1 flex items-center justify-center border-r border-black/30">{ch.v}</div>
        <div className="flex-1 flex items-center justify-center">{ch.p}</div>
      </div>
      <div className="mx-[6px] mt-[4px] h-[42px] border border-[#1c1d1f] rounded-[3px] bg-[#1f2022] grid grid-cols-2 grid-rows-2 gap-px text-[13px] leading-none">
        {["M", "S", <Dot key="d" c={ch.sel ? "#f0f0f0" : "#b9babb"} />, <Half key="h" c={ch.sel ? "#f0f0f0" : "#a9abac"} />].map((b, i) => (
          <div key={i} className={"flex items-center justify-center border-t border-t-white/15 " + (ch.sel ? "bg-[#4c525a]" : "bg-[#3a3d42]")}>{b}</div>
        ))}
      </div>
      <div className="mt-[8px]"><FaderArea ch={ch} /></div>
      <div className="mx-[5px] mt-[2px] h-[16px] bg-[#26282a] text-[11px] text-[#77797b] flex items-center justify-center pt-px leading-none">自动: 关</div>
      <div className="mt-[6px] h-[14px] border-t border-black/40 flex items-center justify-center text-[11.500px] leading-none whitespace-nowrap overflow-hidden" style={{ background: ch.c, color: ch.light ? "#d9ecff" : "#0f3034" }}>{ch.name}</div>
    </div>
  );
}

function MainStrip() {
  const scale = [["6", 17], ["-3", 28], ["-9", 38], ["-24", 62], ["-36", 81], ["-48", 100], ["-60", 117]];
  return (
    <div className="w-[81px] h-full shrink-0 flex flex-col bg-[#32353a] text-[#c3c5c7] border-l border-black">
      <div className="h-[3px] bg-[#3c3f43]" />
      <div className="ml-[3px] mr-[5px] mt-[4px] border border-b-0 border-[#202124] h-[36px] text-[11px] flex flex-col">
        <div className="h-[18px] bg-[#2d3034]" />
        <div className="h-[17px] bg-[#47494a] flex items-center justify-center whitespace-nowrap pt-px">UR242..xL+R</div>
      </div>
      <div className="ml-[3px] mr-[5px] mt-px h-[18px] bg-[#26282a] flex text-[9px] text-[#4a90ba] pt-[3px]">
        <div className="flex-1 flex items-center justify-center border-r border-black/40">-∞</div>
        <div className="flex-1 flex items-center justify-center">-∞</div>
      </div>
      <div className="ml-[3px] mr-[5px] h-[17px] flex text-[11px] pt-[2px]">
        <div className="flex-1 flex items-center justify-center border-r border-black/30">-6.5</div>
        <div className="flex-1 flex items-center justify-center text-[#606366]">0</div>
      </div>
      <div className="ml-[5px] mr-[6px] mt-[4px] h-[42px] border border-[#1c1d1f] rounded-[3px] bg-[#1f2022] flex flex-col gap-px text-[13px] leading-none">
        <div className="flex-1 flex gap-px">
          <div className="flex-1 bg-[#36393e] border-t border-white/15 flex items-center justify-center">M</div>
          <div className="flex-1 bg-[#36393e] border-t border-white/15 flex items-center justify-center">S</div>
        </div>
        <div className="flex-1 flex gap-px">
          <div className="w-[25px] bg-[#36393e] border-t border-white/15 flex items-center justify-center">
            <svg width="12" height="12" viewBox="0 0 12 12"><path d="M4 1H8L11.500 11.500H0.500Z" fill="#b5b7b8" /><path d="M1 2L8 9" stroke="#36393e" strokeWidth="1.400" /></svg>
          </div>
          <div className="w-[15px] bg-[#36393e] border-t border-white/15 flex items-center justify-center">
            <svg width="7" height="12" viewBox="0 0 7 12"><path d="M3.500 0V12" stroke="#b5b7b8" strokeWidth="1.300" /><rect x="0" y="2.500" width="7" height="5" rx="1" fill="#b5b7b8" /></svg>
          </div>
          <div className="flex-1 bg-[#36393e] border-t border-white/15 flex items-center justify-center"><Rings c="#b0b2b3" /></div>
        </div>
      </div>
      <svg width="80" height="142" className="block mt-[8px] -ml-px">
        <rect x="10" y="0" width="11" height="3" fill="#54b8f0" /><rect x="10" y="4" width="11" height="3" fill="#505250" /><rect x="10" y="8" width="5" height="3" fill="#505250" /><rect x="16" y="8" width="5" height="3" fill="#505250" />
        <rect x="33" y="50" width="14" height="71" fill="#5b5e62" />
        {[27, 71, 83, 91, 97].map((y) => <rect key={y} x="34" y={y} width="12" height="1" fill="#85888c" />)}
        <rect x="39" y="16" width="2" height="88" fill="#1d1e1f" />
        <rect x="51" y="12" width="13" height="109" fill="#222527" />
        {[15, 23, 33, 42, 60, 79, 97, 116].map((y) => <rect key={y} x="53" y={y} width="9" height="1" fill={y === 23 ? "#a9adb1" : "#275d7c"} />)}
        {scale.map(([t, y]) => <text key={t} x="78" y={y + 2.500} fontSize="7.500" textAnchor="end" fill="#d0d2d4">{t}</text>)}
        <Knob x={31} y={33} blue />
        <rect x="10" y="76" width="6" height="11" rx="1" fill="#a5a7a8" /><rect x="17" y="76" width="6" height="11" rx="1" fill="#6c6f73" />
        <circle cx="16.500" cy="107" r="6.500" fill="#a5a7a8" /><path d="M16.500 107.500L11.500 101.500" stroke="#303235" strokeWidth="2.600" />
      </svg>
      <div className="ml-[4px] mr-[5px] mt-[2px] h-[16px] bg-[#1f2123] text-[11px] text-[#77797b] flex items-center justify-center pt-px leading-none">自动: 关</div>
      <div className="mt-[5px] h-[15px] bg-[#1e1f20] text-[11.500px] text-[#e5e6e7] flex items-center justify-center leading-none">主要</div>
      <div className="flex-1 bg-[#27282b]" />
    </div>
  );
}

const ROWS = [
  [4, "#ff5a8e", "今夏仍..-hat"], [5, "#a6ff8f", "音轨 16"], [6, "#00e5c8", "今夏仍..tom1"], [7, "#69ffa3", "今夏仍..tom2"],
  [8, "#a6ff8f", "今夏仍..tom3"], [9, "#049cda", "今夏仍..ride"], [10, "#00ffff", "今夏仍..lash"], [11, "#8cff12", "今夏仍..ash1"],
  [12, "#e1ff00", "今夏仍..ash2"], [13, "#0fa8ff", "今夏仍..eavy"], [14, "#0533fa", "今夏仍..lead"], [15, "#0a6cff", "今夏仍..LPCL"],
  [16, "#0561e0", "今夏仍..LPCR"], [17, "#0cbdff", "今夏仍..BASS"],
];

function Console() {
  const side = "flex items-center justify-center shrink-0 bg-[#3a3d41] mb-px";
  return (
    <div className="w-[1320px] h-[333px] ml-[2px] mt-[2px] border border-black bg-[#27282b] flex shrink-0 text-[11px] text-[#c3c5c7]">
      <div className="w-[57px] flex flex-col border-r border-black shrink-0">
        <div className={side + " h-[23px] bg-[#44474a] gap-[22px]"}>
          <svg width="11" height="11" viewBox="0 0 11 11"><path d="M1 1L10 10M10 1L1 10" stroke="#b5b7b8" strokeWidth="2.600" /></svg>
          <svg width="11" height="11" viewBox="0 0 11 11"><path d="M3 0H11V8L8.500 5.500L3 11L0.500 8L5.500 3Z" fill="#a5a7a8" /></svg>
        </div>
        <div className="h-[22px] shrink-0 flex mb-px">
          <div className="w-[40px] bg-[#3a3d41] flex items-center whitespace-nowrap px-[3px] pt-px"><div className="overflow-hidden w-[34px] flex justify-center">输入/输出</div></div>
          <div className="flex-1 ml-px bg-[#3a3d41] flex items-center justify-center"><Down c="#d0d2d4" /></div>
        </div>
        <div className={side + " h-[23px]"}><Wrench s={12} /></div>
        <div className="h-[44px] shrink-0" />
        <div className={side + " h-[27px] flex-col gap-[4px]"}><Tri d="u" c="#c3c5c7" w={10} h={7} /><Tri d="d" c="#c3c5c7" w={10} h={7} /></div>
        <div className={side + " h-[27px] gap-[4px]"}><Tri d="r" c="#a5a7a8" w={7} h={10} /><Tri d="l" c="#a5a7a8" w={7} h={10} /></div>
        {["输入", "输出", "外部", "乐器"].map((t) => <div key={t} className={side + " h-[23px] pt-[2px]"}>{t}</div>)}
        <div className={side + " h-[23px]"}>
          <svg width="13" height="12" viewBox="0 0 13 12"><path d="M0 4H3V12H0ZM5 3H8V12H5ZM10 4H13V12H10Z" fill="#9ea0a2" /><circle cx="1.500" cy="2" r="1.500" fill="#9ea0a2" /><circle cx="6.500" cy="1.300" r="1.300" fill="#9ea0a2" /><circle cx="11.500" cy="2" r="1.500" fill="#9ea0a2" /></svg>
        </div>
        <div className="h-[23px] shrink-0 bg-[#2a82c1] flex items-center justify-center"><Lines c="#fff" w={16} h={11} n={4} /></div>
      </div>
      <div className="w-[197px] flex flex-col shrink-0">
        <div className="h-[23px] shrink-0 bg-[#44474a] flex pt-px">
          <div className="w-[145px] flex items-center justify-center pl-[35px] border-r border-black">通道</div>
          <div className="flex items-center pl-[4px]">组</div>
        </div>
        <div className="h-[268px] shrink-0 overflow-hidden flex">
          <div className="w-[191px] flex flex-col">
            {ROWS.map(([n, c, name]) => (
              <div key={n} className={"h-[20px] shrink-0 flex items-center " + (n === 13 ? "bg-[#4a4d55]" : "")}>
                <div className="w-[25px] text-right text-[12px] leading-none pt-px">{n}</div>
                <div className="ml-[4px] w-[6px] h-[18px] border-x-2 border-[#3b3d41]" />
                <div className="ml-[6px]"><Dot c="#d8d9da" s={6} /></div>
                <div className="w-[23px] flex justify-center">
                  {n === 5 ? (
                    <svg width="10" height="8" viewBox="0 0 10 8"><path d="M0 1H5V7H0M1 4H10" fill="none" stroke="#c3c5c7" strokeWidth="1.400" /></svg>
                  ) : (
                    <svg width="11" height="8" viewBox="0 0 11 8"><path d="M0 3.500Q2.500 -1 5.500 3.500ZM5.500 4Q8 9 11 4Z" fill="#c3c5c7" /><path d="M2 2L9 6" stroke="#c3c5c7" strokeWidth="1.600" /></svg>
                  )}
                </div>
                <div className="w-[6px] h-[18px]" style={{ background: c }} />
                <div className="ml-[13px] w-[58px] overflow-hidden whitespace-nowrap text-[11px] leading-[18px] pt-[2px]">{name}</div>
              </div>
            ))}
          </div>
          <div className="ml-[2px] mt-[44px] w-[4px] h-[210px] bg-[#55585e]" />
        </div>
        <div className="h-[23px] shrink-0 flex gap-px text-[#55585c]">
          <div className="w-[28px] bg-[#2a82c1] flex items-center justify-center"><Wave c="#fff" /></div>
          <div className="w-[28px] bg-[#34363a] flex items-center justify-center"><svg width="11" height="8"><path d="M1 0V7H10V0M4 0V5M7 0V5" fill="none" stroke="#6a6d71" strokeWidth="1.500" /></svg></div>
          <div className="w-[28px] bg-[#34363a] flex items-center justify-center text-[#63666a] font-bold text-[10px]">FX</div>
          <div className="w-[26px] bg-[#2a82c1] flex items-center justify-center"><svg width="11" height="8"><path d="M0 1H5V7H0M1 4H11" fill="none" stroke="#fff" strokeWidth="1.500" /></svg></div>
          <div className="w-[27px] bg-[#34363a] flex items-center justify-center"><svg width="13" height="10"><path d="M3 0V10M10 0V10M0 6H6" stroke="#5a5d61" strokeWidth="1.200" /><circle cx="10" cy="3" r="2.500" fill="#5a5d61" /></svg></div>
          <div className="flex-1 bg-[#34363a] flex items-center justify-center text-[#b5b7b9] pt-px">远程</div>
        </div>
        <div className="h-[17px] shrink-0 flex mt-px gap-px items-stretch">
          <div className="flex-1 flex items-center justify-end pr-[6px]"><Down c="#85888b" w={7} h={5} /></div>
          <div className="w-[18px] bg-[#303236] flex items-center justify-center"><svg width="8" height="9"><path d="M0 4H8V9H0ZM2 2V0.500H6V4" fill="none" stroke="#55585c" /></svg></div>
          <div className="w-[18px] bg-[#34363a] flex items-center justify-center"><Plus c="#d8d9da" s={8} t={2.500} /></div>
          <div className="w-[18px] bg-[#34363a] flex items-center justify-center"><div className="w-[8px] h-[2px] bg-[#d8d9da]" /></div>
        </div>
      </div>
      <div className="w-[2px] bg-black" />
      <div className="w-[981px] flex flex-col overflow-hidden shrink-0">
        <div className="h-[313px] flex gap-[2px] -ml-[16px] bg-[#17181a] shrink-0">
          {CHANNELS.map((ch) => <Strip key={ch.n} ch={ch} />)}
        </div>
        <div className="h-[18px] flex items-center border-t border-black">
          <div className="ml-[7px]"><Tri d="l" w={6} h={9} /></div>
          <div className="ml-[296px] w-[646px] h-[5px] bg-[#6b6d6f]" />
          <div className="ml-[12px]"><Tri d="r" w={6} h={9} /></div>
        </div>
      </div>
      <MainStrip />
    </div>
  );
}

/* ---------- browser ---------- */

const Folder = ({ children }) => (
  <svg width="15" height="12" viewBox="0 0 15 12" className="shrink-0">
    <path d="M0 0.500H5L6.500 2.500H14V6H0Z" fill="#9fb0bf" />
    <path d="M0 3H14V12H0Z" fill="#cfd2d4" />
    {children}
  </svg>
);
const VENDORS = ["Audio Ease", "BBE Sound", "Celemony", "FabFilter", "IK Multimedia", "iZotope, Inc.", "Kilohearts", "Kush Audio", "Lexicon", "LiquidSonics", "Neural DSP", "PreSonus", "Relab Development", "Slate Digital", "Softube", "Steinberg Media Technologies", "TC Electronic", "Tonsturm", "Waves", "Xfer Records", "XLN Audio"];

const Item = ({ icon, children }) => (
  <div className="h-[22px] shrink-0 flex items-center pl-[28px] text-[12px] tracking-[.25px]">
    <Tri d="r" c="#d0d2d4" w={4} h={8} />
    <div className="w-[26px] pl-[5px] flex">{icon}</div>
    <span>{children}</span>
  </div>
);

function Browser() {
  const tabs = [["乐器", 34], ["效果", 34], ["循环", 34], ["文件", 34], ["云", 23], ["商店", 34], ["素材池", 45]];
  return (
    <div className="w-[376px] h-[922px] ml-[2px] mt-[3px] border border-black bg-[#27282c] flex flex-col shrink-0 text-[11px] text-[#b7b9bb]">
      <div className="h-[31px] shrink-0 bg-[#27292b] border-b border-black flex items-center">
        <svg width="12" height="12" viewBox="0 0 12 12" className="ml-[6px] mr-[6px]"><path d="M6 0L12 7H10.500V12H7.500V8H4.500V12H1.500V7H0Z" fill="#a9abac" /></svg>
        {tabs.map(([t, w], i) => (
          <div key={t} style={{ width: w }} className={"flex items-center justify-center h-full whitespace-nowrap pt-px " + (i === 1 ? "bg-[#4c4f55] text-[#eaebec] mt-px" : "")}>{t}</div>
        ))}
        <svg width="14" height="14" viewBox="0 0 14 14" className="ml-auto mr-[4px]"><circle cx="5.500" cy="5.500" r="4" fill="none" stroke="#a9abac" strokeWidth="1.800" /><path d="M8.500 8.500L13 13" stroke="#a9abac" strokeWidth="2.200" /></svg>
      </div>
      <div className="h-[20px] shrink-0 bg-[#4c4f55] flex items-center pl-[5px] text-[#85888c]">
        <span className="text-[#b7b9bb] w-[66px]">排序方式:</span>
        <span className="w-[34px]">平铺</span><span className="w-[45px]">文件夹</span><span className="w-[45px] text-[#eaebec]">供应商</span><span>类型</span>
        <div className="ml-auto flex items-center gap-[9px] pr-[4px]">
          <Wrench c="#8f9295" s={11} />
          <svg width="12" height="12"><rect x="1" y="1.500" width="10" height="9" rx="1" fill="none" stroke="#fff" strokeWidth="1.600" /><path d="M0 1.500H12M0 10.500H12" stroke="#fff" strokeWidth="2" /></svg>
          <svg width="12" height="12"><path d="M0 1.500H12M3 4.500H12M5 7.500H12M7 10.500H12" stroke="#fff" strokeWidth="2" /></svg>
        </div>
      </div>
      <div className="h-[22px] shrink-0 bg-[#35373c] border-b border-[#1b1c1e] flex items-center pt-px pl-[5px] gap-[12px] text-[#dfe0e1]">效果<span className="text-[#3494d4]">&gt;</span></div>
      <div className="border-b border-[#4a4d50] flex flex-col shrink-0 mb-[-1px]">
        <Item icon={<svg width="15" height="14" viewBox="0 0 15 14"><text x="2" y="7" fontSize="8.500" fontWeight="bold" fill="#c3c5c7">FX</text><rect x="2.500" y="9.500" width="5" height="3" rx="1.500" fill="none" stroke="#a9abac" /><rect x="7.500" y="9.500" width="5" height="3" rx="1.500" fill="none" stroke="#a9abac" /></svg>}>FX链</Item>
        <Item icon={<svg width="16" height="13" viewBox="0 0 16 13"><path d="M0 0.500H6L7.500 2H16V6H0Z" fill="#9fb0bf" /><path d="M0 2.500H16V13H0Z" fill="#cfd2d4" /><path d="M4 12V9M7 12V6M10 12V8" stroke="#55595f" strokeWidth="1.600" /></svg>}>Mix FX</Item>
        <Item icon={<svg width="15" height="15" viewBox="0 0 15 15"><path d="M7.500 1L9.300 5.600L14 6L10.400 9L11.600 13.800L7.500 11.200L3.400 13.800L4.600 9L1 6L5.700 5.600Z" fill="none" stroke="#c3c5c7" strokeWidth="1.200" /></svg>}>收藏夹</Item>
        <Item icon={<svg width="15" height="15" viewBox="0 0 15 15"><path d="M7.500 1A6.500 6.500 0 1 1 3 12" fill="none" stroke="#c3c5c7" strokeWidth="1.300" /><path d="M3 12A6.500 6.500 0 0 1 7.500 1" fill="none" stroke="#c3c5c7" strokeWidth="1.300" strokeDasharray="1.500 1.500" /><path d="M7.500 3.500V8L10.500 11" fill="none" stroke="#c3c5c7" strokeWidth="1.200" /></svg>}>最近的</Item>
      </div>
      {VENDORS.map((v) => (
        <Item key={v} icon={v === "PreSonus" ? (
          <svg width="15" height="12" viewBox="0 0 15 12"><path d="M1 3V9M3.500 1V11M6 0V12M8.500 0V5M8.500 7V12M11 1V11M13.500 3V9" stroke="#c3c5c7" strokeWidth="1.300" /></svg>
        ) : <Folder />}>{v}</Item>
      ))}
      <div className="flex-1" />
      <div className="h-[100px] shrink-0 bg-[#35373c] flex pl-[10px] pt-[7px]">
        <svg width="32" height="26" viewBox="0 0 32 26" className="mt-[7px]"><path d="M0 4Q0 1 3 1H11Q13 1 14 3H32V25H0Z" fill="#a9b3bf" /><path d="M0 5H31V25H0Z" fill="#dde0e1" /></svg>
        <div className="ml-[9px] flex flex-col"><span className="text-[16px] leading-[17px] text-[#dfe0e1]">效果</span><span className="leading-none mt-[5px]">效果</span></div>
      </div>
    </div>
  );
}

/* ---------- transport ---------- */

const Two = ({ w, a, b, left, big }) => (
  <div className={"flex flex-col shrink-0 h-full pt-[6px] " + (left ? "items-start" : "items-center")} style={{ width: w }}>
    <div className={big ? "text-[19.300px] font-bold leading-[18px] h-[17px] pl-[10px]" : "text-[13px] leading-[16px] h-[16px] flex items-center gap-[9px]"}>{a}</div>
    <div className="text-[10px] leading-[15px] text-[#85888b] whitespace-nowrap">{b}</div>
  </div>
);

function Transport() {
  const c = "#c3c5c7";
  return (
    <div className="h-[49px] shrink-0 flex flex-col">
      <div className="h-[42px] bg-[#5d6168] flex text-[#c9cbcd]">
        <div className="ml-[15px] w-[1421px] h-[41px] pl-[12px] bg-[#131415] flex items-center shrink-0 [clip-path:polygon(0_0,100%_0,calc(100%_-_12px)_100%,9px_100%)]">
          <Two w={40} a={<svg width="27" height="14" viewBox="0 0 27 14"><circle cx="13.500" cy="7" r="6" fill="none" stroke="#66696c" strokeWidth="1.500" /><circle cx="10" cy="7" r="1" fill="#66696c" /><circle cx="17" cy="7" r="1" fill="#66696c" /><circle cx="11" cy="4.500" r="1" fill="#66696c" /><circle cx="16" cy="4.500" r="1" fill="#66696c" /><path d="M0 4V10L4 7ZM23 4V10L27 7Z" fill="#4a4d50" /></svg>} b={<span className="text-[11px]">MIDI</span>} />
          <div className="w-[75px] h-full flex flex-col pl-[4px] pt-[8px] shrink-0">
            <div className="w-[65px] h-[5px] bg-[#36383b]"><div className="w-[6px] h-full bg-[#54a6cf]" /></div>
            <div className="w-[65px] h-[5px] mt-[2px] bg-[#36383b]" />
            <div className="text-[10px] leading-none mt-[6px] text-[#a5a7a8] pl-[24px]">性能</div>
          </div>
          <div className="w-[45px] flex justify-center shrink-0">
            <svg width="24" height="24" viewBox="0 0 24 24">{Array.from({ length: 12 }, (_, i) => <circle key={i} cx={12 + 10.500 * Math.cos((i * Math.PI) / 6)} cy={12 + 10.500 * Math.sin((i * Math.PI) / 6)} r="1.400" fill="#a9abac" />)}</svg>
          </div>
          <div className="pl-[2px] h-full shrink-0"><Two w={68} left a="44.1 kHz" b={<span className="text-[11px] text-[#c9cbcd]">135.7 ms</span>} /></div>
          <Two w={105} left a="4:12 天" b="最大剩余录音时间" />
          <Two w={88} a="00:03:17.553" b="秒" />
          <Two w={172} big a="00078.02.02.99" b="小节" />
          <Cell w={20}><Tri d="l" c={c} w={10} h={13} /></Cell>
          <Cell w={31}><Tri d="l" c={c} w={9} h={12} /><Tri d="l" c={c} w={9} h={12} /></Cell>
          <Cell w={31}><Tri d="r" c={c} w={9} h={12} /><Tri d="r" c={c} w={9} h={12} /></Cell>
          <Cell w={18}><Tri d="r" c={c} w={10} h={13} /></Cell>
          <Cell w={30}><div className="w-[1.5px] h-[12px] bg-[#c3c5c7]" /><Tri d="l" c={c} w={10} h={12} /></Cell>
          <Cell w={44}><div className="w-[20px] h-[20px] bg-[#2fb2dc]" /></Cell>
          <Cell w={30}><Tri d="r" c={c} w={16} h={20} /></Cell>
          <Cell w={36}><Dot c={c} s={20} /></Cell>
          <Cell w={48}>
            <svg width="33" height="22" viewBox="0 0 33 22"><path d="M13 11L9 19.500Q1 20 1.500 11Q2 2 10 2H23Q31 2 31.500 11Q31 20 24 20H17L20 12" fill="none" stroke={c} strokeWidth="2" /></svg>
          </Cell>
          <div className="w-[131px] pl-[12px] pt-px shrink-0 text-[12.700px] leading-[15px] flex flex-col">
            <div className="flex"><span className="w-[14px] text-[#43708c] text-[11px]">L</span>00001.01.01.00</div>
            <div className="flex"><span className="w-[14px] text-[#43708c] text-[11px]">R</span>00083.02.02.02</div>
          </div>
          <div className="w-[58px] shrink-0 flex flex-col gap-[3px] pl-[8px]">
            <div className="flex gap-[10px] items-center h-[14px]">
              <svg width="17" height="10"><path d="M0 2H6L9 7H17M0 7L9 2" fill="none" stroke="#8b8e91" strokeWidth="1.200" /></svg>
              <svg width="16" height="10"><path d="M1 0V10M3 5H7" stroke="#8b8e91" strokeDasharray="2 1" /><path d="M7.500 0V10M9 5H14" stroke="#8b8e91" strokeWidth="1.500" /><rect x="8" y="3" width="7" height="4" fill="#8b8e91" /></svg>
            </div>
            <div className="flex gap-[12px] items-center h-[14px] pl-[2px]">
              <svg width="12" height="12" viewBox="0 0 12 12"><circle cx="6" cy="6" r="3.400" fill="none" stroke="#8b8e91" strokeWidth="2.200" /><circle cx="6" cy="6" r="5" fill="none" stroke="#8b8e91" strokeWidth="1.800" strokeDasharray="2 1.930" /></svg>
              <svg width="17" height="10"><path d="M0 5H17" stroke="#8b8e91" strokeDasharray="2 1" /><rect x="5" y="3" width="7" height="4" fill="#8b8e91" /><path d="M4.500 0V10M12.500 0V10" stroke="#8b8e91" /></svg>
            </div>
          </div>
          <Two w={64} a={<><Dot c="#6f7776" s={9} /><Wrench c="#97999c" s={12} /><svg width="12" height="12" viewBox="0 0 12 12"><path d="M4 1H8L11.500 11.500H0.500Z" fill="#45b5e0" /><path d="M1 2L8 9" stroke="#131415" strokeWidth="1.400" /></svg></>} b="节拍器" />
          <Two w={62} a="4 / 4" b="时间修整" />
          <Two w={26} a="-" b="键" />
          <Two w={68} a="94.00" b="速度" />
          <div className="w-[70px] h-full pt-[8px] pl-px flex flex-col shrink-0">
            <div className="w-[67px] h-[4px] bg-[#34363a]" /><div className="w-[67px] h-[4px] bg-[#34363a] mt-px" />
            <div className="flex h-[9px] mt-[8px] gap-px">{Array.from({ length: 33 }, (_, i) => <div key={i} className={"w-px h-full " + (i < 20 ? "bg-[#4a8fb0]" : "bg-[#3b3d40]")} />)}</div>
          </div>
          <div className="h-full pt-[24px] pl-[6px]"><Rings c="#35b0dc" /></div>
        </div>
        <div className="flex-1" />
        <Cell w={56} className="border-l border-[#484b50] text-[12px] text-[#c3c5c7] pt-[8px]">编辑</Cell>
        <Cell w={57} className="bg-[#3494d4] border-l border-[#484b50] text-[12px] text-[#e5f2fb] pt-[8px]">混音</Cell>
        <Cell w={66} className="bg-[#3494d4] border-l border-[#484b50] text-[12px] text-[#e5f2fb] pt-[8px]">浏览</Cell>
      </div>
      <div className="h-[7px] flex">
        <div className="flex-1 bg-[#414449] border-t-2 border-[#7b7e82]" />
        <div className="w-[179px] bg-[#414a52] border-t-2 border-[#3b6c8e]" />
      </div>
    </div>
  );
}

export default function App() {
  return (
    <div className="w-[1914px] h-[1078px] overflow-hidden flex flex-col bg-[#e9e9e9] select-none font-['Liberation_Sans','Noto_Sans_CJK_SC',sans-serif]">
      <div className="h-[1071px] flex shrink-0">
        <div className="w-[7px] flex flex-col bg-gradient-to-r from-[#f4f4f4] to-[#cfcfcf]">
          <div className="h-[2px] bg-[#2d6fb5]" />
          <div className="h-[30px] bg-[#d5d5d5]" />
          <div className="h-[38px] border-b border-[#bdbdbd]" />
        </div>
        <div className="w-[1900px] shrink-0 border-x border-b border-[#1883d7] flex flex-col bg-[#17181a]">
          <TitleBar />
          <MenuBar />
          <Toolbar />
          <div className="h-[928px] flex shrink-0 border-b border-black pl-[2px]">
            <Inspector />
            <div className="flex flex-col shrink-0"><Arrange /><Console /></div>
            <Browser />
          </div>
          <Transport />
        </div>
        <div className="w-[7px] flex flex-col">
          <div className="h-[31px] bg-[#e2e2e2]" />
          <div className="h-[83px] bg-gradient-to-b from-[#4b2b38] to-[#8a4b60]" />
          <div className="h-[443px] bg-[#e6e6e6]" />
          <div className="h-[270px] bg-[#1f2022]" />
          <div className="h-[22px] bg-[#24408a]" />
          <div className="flex-1 bg-[#1f2022]" />
        </div>
      </div>
      <div className="h-[7px] flex shrink-0 overflow-hidden text-[13px]">
        <div className="w-[1019px] bg-[#dcdcdc] flex pl-[78px]"><div className="w-[26px] h-full bg-[#c3d0ea] flex justify-center"><div className="w-[15px] h-[6px] rounded-b-full bg-[#2d5bc9]" /></div></div>
        <div className="flex-1 bg-[#2c3036] text-[#8a8e94] pl-[13px] flex whitespace-pre leading-[2px]"><div className="w-[7px] h-[4px] border border-t-0 border-[#3b5fb0] mr-[5px]" /><span>Ougan</span><span className="mx-[10px]">&gt;</span><div className="w-[13px] h-[5px] border border-t-0 border-[#8a8e94] mr-[5px]" /><span>resources</span></div>
      </div>
    </div>
  );
}
